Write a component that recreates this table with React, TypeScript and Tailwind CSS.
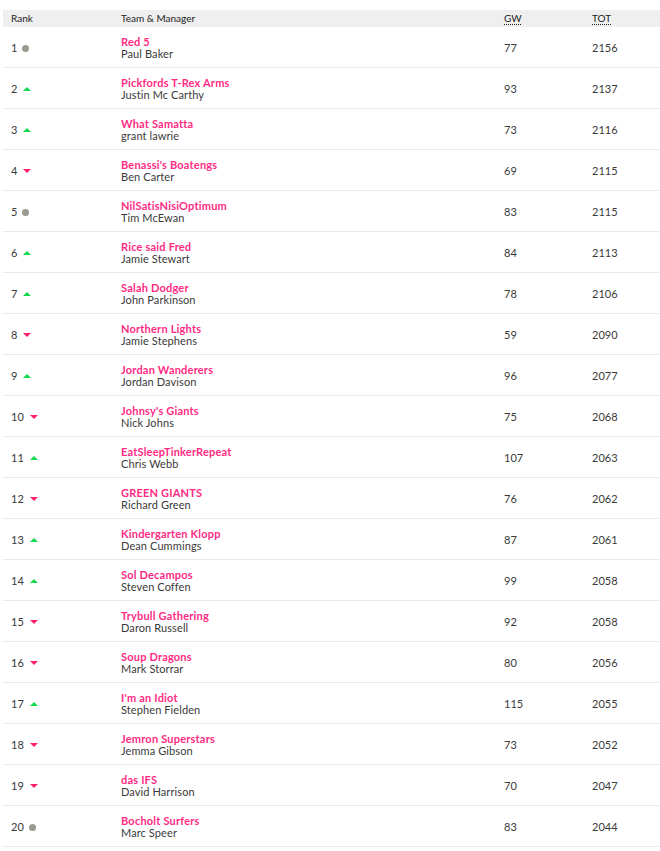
const rows: [number, "same" | "up" | "down", string, string, number, number][] = [
  [1, "same", "Red 5", "Paul Baker", 77, 2156],
  [2, "up", "Pickfords T-Rex Arms", "Justin Mc Carthy", 93, 2137],
  [3, "up", "What Samatta", "grant lawrie", 73, 2116],
  [4, "down", "Benassi's Boatengs", "Ben Carter", 69, 2115],
  [5, "same", "NilSatisNisiOptimum", "Tim McEwan", 83, 2115],
  [6, "up", "Rice said Fred", "Jamie Stewart", 84, 2113],
  [7, "up", "Salah Dodger", "John Parkinson", 78, 2106],
  [8, "down", "Northern Lights", "Jamie Stephens", 59, 2090],
  [9, "up", "Jordan Wanderers", "Jordan Davison", 96, 2077],
  [10, "down", "Johnsy's Giants", "Nick Johns", 75, 2068],
  [11, "up", "EatSleepTinkerRepeat", "Chris Webb", 107, 2063],
  [12, "down", "GREEN GIANTS", "Richard Green", 76, 2062],
  [13, "up", "Kindergarten Klopp", "Dean Cummings", 87, 2061],
  [14, "up", "Sol Decampos", "Steven Coffen", 99, 2058],
  [15, "down", "Trybull Gathering", "Daron Russell", 92, 2058],
  [16, "down", "Soup Dragons", "Mark Storrar", 80, 2056],
  [17, "up", "I'm an Idiot", "Stephen Fielden", 115, 2055],
  [18, "down", "Jemron Superstars", "Jemma Gibson", 73, 2052],
  [19, "down", "das IFS", "David Harrison", 70, 2047],
  [20, "same", "Bocholt Surfers", "Marc Speer", 83, 2044],
];

const Movement = ({ kind }: { kind: "same" | "up" | "down" }) => {
  if (kind === "same") {
    return <span className="inline-block w-[7px] h-[7px] rounded-full bg-[#9a9a90] ml-[5px]" />;
  }
  return (
    <svg width="10" height="6" viewBox="0 0 10 6" className="ml-[5px]">
      {kind === "up" ? (
        <polygon points="5,1 9,5 1,5" fill="#13d94c" />
      ) : (
        <polygon points="1,1 9,1 5,5" fill="#ff1f6d" />
      )}
    </svg>
  );
};

const App = () => {
  return (
    <div className="w-[660px] h-[851px] bg-white pt-[10px] pl-[3px] font-['Lato','Noto_Sans',sans-serif] text-[#3a3a3a]">
      <div className="grid grid-cols-[118px_383px_88px_1fr] h-[17px] items-center bg-[#efefef] text-[10px] text-[#222]">
        <span className="pl-[8px]">Rank</span>
        <span>Team &amp; Manager</span>
        <span className="underline decoration-dotted underline-offset-2">GW</span>
        <span className="underline decoration-dotted underline-offset-2">TOT</span>
      </div>
      {rows.map(([rank, move, team, manager, gw, tot]) => (
        <div
          key={rank}
          className="grid grid-cols-[118px_383px_88px_1fr] h-[41px] items-center border-b border-[#e8e8e8] text-[11px]"
        >
          <div className="pl-[8px] pt-[2px] flex items-center">
            <span>{rank}</span>
            <Movement kind={move} />
          </div>
          <div className="flex flex-col leading-[12px] pt-[1px]">
            <span className="font-bold text-[#ff2b84] tracking-[0.2px]">{team}</span>
            <span className="tracking-[0.1px]">{manager}</span>
          </div>
          <span className="pt-[2px]">{gw}</span>
          <span className="pt-[2px]">{tot}</span>
        </div>
      ))}
    </div>
  );
};

export default App;
